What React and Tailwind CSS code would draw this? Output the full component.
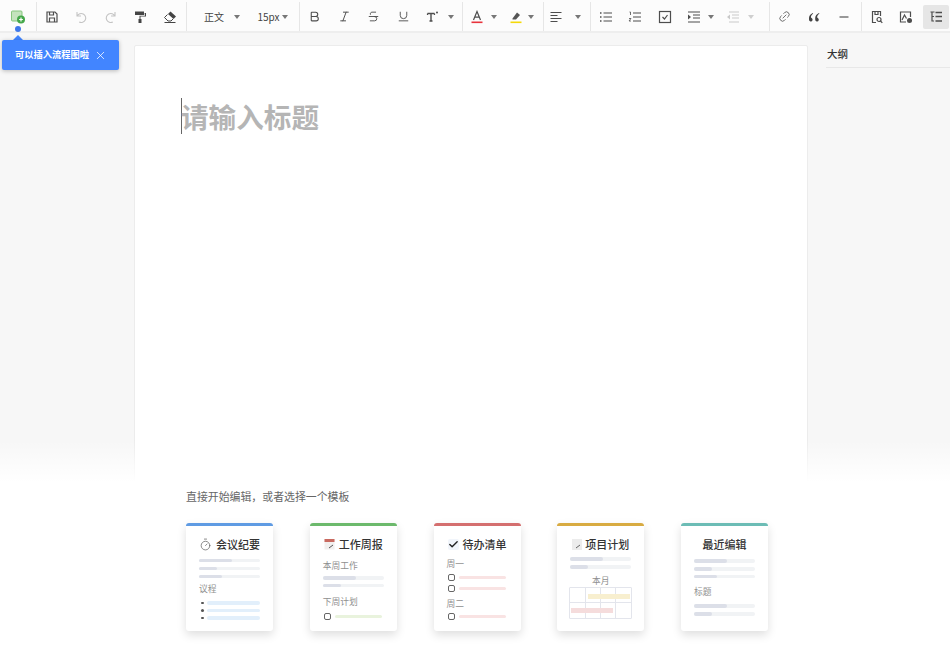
import { Bold, Italic, Strikethrough, Underline, Link2, Minus, X, Check, Timer } from 'lucide-react';

const INK = '#4d4d4d';

function Icon({ children, w = 14, className = '' }) {
  return (
    <svg width={w} height={14} viewBox="0 0 14 14" fill="none" stroke={INK} strokeWidth="1.2" className={className}>
      {children}
    </svg>
  );
}

function Btn({ children, className = 'w-[29.5px]' }) {
  return <div className={`h-full flex items-center justify-center shrink-0 ${className}`}>{children}</div>;
}

function Caret({ className = '', light }) {
  return (
    <div
      className={`w-0 h-0 shrink-0 border-l-[3.5px] border-r-[3.5px] border-t-[4px] border-l-transparent border-r-transparent ${light ? 'border-t-[#cfcfcf]' : 'border-t-[#777777]'} ${className}`}
    />
  );
}

function Group({ children, className = '' }) {
  return <div className={`h-full flex items-center border-l border-[#e6e6e6] ${className}`}>{children}</div>;
}

function Toolbar() {
  return (
    <div className="h-[33px] shrink-0 pt-[2px] bg-[#fcfcfc] border-b-2 border-[#eeeeee] flex items-stretch text-[#444444]">
      <div className="w-[36px] h-full flex items-center justify-center shrink-0">
        <svg width="14" height="14" viewBox="0 0 14 14">
          <rect x="0.5" y="1" width="10.5" height="10" rx="1" fill="#c4e3bd" stroke="#86c67e" />
          <circle cx="10" cy="9.5" r="4" fill="#45a84a" />
          <path d="M10 7.6v3.8M8.1 9.5h3.8" stroke="#fff" strokeWidth="1.2" />
        </svg>
      </div>

      <Group className="w-[150px]">
        <Btn>
          <Icon>
            <path d="M2 2h8l2 2v8H2z" />
            <path d="M4.5 2v3h4V2M4.5 12V8h5v4" />
          </Icon>
        </Btn>
        <Btn>
          <svg width="14" height="14" viewBox="0 0 14 14" fill="none" stroke="#c4c4c4" strokeWidth="1.1">
            <path d="M3 2v4h4M3.2 6a4.5 4.5 0 1 1 2 6" />
          </svg>
        </Btn>
        <Btn>
          <svg width="14" height="14" viewBox="0 0 14 14" fill="none" stroke="#c4c4c4" strokeWidth="1.1">
            <path d="M11 2v4H7M10.8 6a4.5 4.5 0 1 0-2 6" />
          </svg>
        </Btn>
        <Btn>
          <svg width="14" height="14" viewBox="0 0 14 14" fill="#444444">
            <rect x="2" y="1.5" width="9" height="3.5" />
            <path d="M11.5 3H13v3.5H7.5V9h-1V5.8H12z" />
            <rect x="5.5" y="9" width="3" height="4" />
          </svg>
        </Btn>
        <Btn>
          <svg width="14" height="14" viewBox="0 0 14 14" fill="#444444">
            <path d="M7.5 1.5 13 6.5l-2.5 2.5-5.5-5z" />
            <path d="M4.5 4.5 1.5 7.5l3.5 3.5h3l2-2" fill="none" stroke="#444444" />
            <rect x="1.5" y="12" width="11" height="1" />
          </svg>
        </Btn>
      </Group>

      <Group className="w-[113px]">
        <span className="w-[54px] text-center text-[10px]">正文</span>
        <Caret className="ml-[-7.5px]" />
        <span className="w-[38px] ml-[10px] text-center text-[10px]">15px</span>
        <Caret className="ml-[-5.5px]" />
      </Group>

      <Group className="w-[163px]">
        <Btn><Bold size={13} color={INK} strokeWidth={2} /></Btn>
        <Btn><Italic size={13} color={INK} strokeWidth={1.8} /></Btn>
        <Btn><Strikethrough size={13} color={INK} strokeWidth={1.7} /></Btn>
        <Btn><Underline size={13} color={INK} strokeWidth={1.7} /></Btn>
        <Btn>
          <Icon>
            <path d="M1.5 3.5h7M5 3.5V11M3.5 11h3" strokeWidth="1.4" />
            <path d="M1.5 3.5v1.5M8.5 3.5v1.5" />
            <circle cx="11" cy="2.5" r="1" fill={INK} stroke="none" />
          </Icon>
        </Btn>
        <Caret />
      </Group>

      <Group className="w-[81px]">
        <Btn className="w-[28px]">
          <svg width="14" height="14" viewBox="0 0 14 14" fill="none">
            <path d="M3.5 10 7 1.5 10.5 10M4.7 7.2h4.6" stroke={INK} strokeWidth="1.2" />
            <rect x="1.5" y="11.5" width="11" height="1.6" fill="#e8333c" />
          </svg>
        </Btn>
        <Caret />
        <Btn className="w-[24px] ml-[7px]">
          <svg width="14" height="14" viewBox="0 0 14 14" fill="none">
            <path d="M3.5 8.5 8 2.5l3 2.5-4 4.5H3.5z" fill="#555555" />
            <rect x="1.5" y="11.5" width="11" height="1.6" fill="#f5d90a" />
          </svg>
        </Btn>
        <Caret />
      </Group>

      <Group className="w-[47px]">
        <Btn className="w-[24px]">
          <Icon>
            <path d="M1.5 2.5h11M1.5 5.5h7M1.5 8.5h11M1.5 11.5h7" />
          </Icon>
        </Btn>
        <Caret className="ml-[7px]" />
      </Group>

      <Group className="w-[179px]">
        <Btn>
          <Icon>
            <path d="M1 3h1.5M1 7h1.5M1 11h1.5" strokeWidth="1.6" />
            <path d="M4.5 3H13M4.5 7H13M4.5 11H13" />
          </Icon>
        </Btn>
        <Btn>
          <Icon>
            <path d="M1.5 2h1v3M1 8.5h2L1 11h2" strokeWidth="0.8" />
            <path d="M5 3h8M5 7h8M5 11h8" />
          </Icon>
        </Btn>
        <Btn>
          <Icon>
            <rect x="1.5" y="1.5" width="11" height="11" />
            <path d="m4.5 7 2 2 3-4" />
          </Icon>
        </Btn>
        <Btn>
          <Icon>
            <path d="M1 2h12M6 5h7M6 8h7M1 12h12" />
            <path d="M1 4.5v5L4 7z" fill={INK} stroke="none" />
          </Icon>
        </Btn>
        <Caret className="ml-[-1px]" />
        <Btn className="w-[39px] ml-[-1px]">
          <svg width="14" height="14" viewBox="0 0 14 14" fill="none" stroke="#c9c9c9" strokeWidth="1.1">
            <path d="M3 2h10M6 5h7M6 8h7M3 12h10" />
            <path d="M4 4.5v5L1 7z" fill="#c9c9c9" stroke="none" />
          </svg>
        </Btn>
        <Caret light className="ml-[-4px]" />
      </Group>

      <Group className="w-[92px]">
        <Btn><Link2 size={13} color={INK} strokeWidth={1.4} className="-rotate-45" /></Btn>
        <Btn>
          <svg width="14" height="14" viewBox="0 0 14 14" fill="#444444">
            <path d="M5.8 3C3.5 4 2 5.8 2 8v1.5A1.8 1.8 0 1 0 4.6 8C4 7.8 3.8 7.3 4 6.5c.3-1 1-2 2.2-2.7zM12 3c-2.3 1-3.8 2.8-3.8 5v1.5A1.8 1.8 0 1 0 10.8 8c-.6-.2-.8-.7-.6-1.5.3-1 1-2 2.2-2.7z" />
          </svg>
        </Btn>
        <Btn><Minus size={14} color="#333333" strokeWidth={1.7} /></Btn>
      </Group>

      <Group className="grow">
        <Btn>
          <Icon>
            <path d="M6 12.5H2.5v-11h8V6" />
            <path d="M5 1.5v3h3v-3" />
            <circle cx="9" cy="9.5" r="2" />
            <path d="m10.5 11 1.8 1.8" />
          </Icon>
        </Btn>
        <Btn>
          <Icon>
            <path d="M7 12H1.5V2h10v5" />
            <path d="m3 10 2.5-5 2 3.5" />
            <circle cx="10.5" cy="10.5" r="2.5" fill={INK} stroke="none" />
          </Icon>
        </Btn>
        <div className="w-[26px] h-[24px] ml-[1.5px] rounded-[2px] bg-[#e6e6e6] flex items-center justify-center">
          <Icon>
            <path d="M1.5 2h4M3 2v9h2M3 6.5h2" />
            <path d="M6.5 2.5H13M6.5 6.5H13M6.5 11H13" strokeWidth="1.5" />
          </Icon>
        </div>
      </Group>
    </div>
  );
}

function Bar({ w, color = 'bg-[#dcdfe8]', className = '' }) {
  return (
    <div className={`h-[3.5px] rounded-full bg-[#f1f3f5] ${className}`}>
      <div className={`h-full rounded-full ${color}`} style={{ width: w }} />
    </div>
  );
}

function Label({ children, className = '' }) {
  return <div className={`text-[8.75px] leading-[12px] text-[#8f8f8f] ${className}`}>{children}</div>;
}

function CheckRow({ color, className = '' }) {
  return (
    <div className={`flex items-center gap-[4px] h-[7px] ml-[1px] mr-[2px] ${className}`}>
      <div className="w-[7px] h-[7px] shrink-0 rounded-[2px] border-[1.3px] border-[#666666]" />
      <div className={`h-[3.5px] grow rounded-full ${color}`} />
    </div>
  );
}

function Dot({ className = '' }) {
  return (
    <div className={`flex items-center gap-[3px] h-[4px] ml-[2px] ${className}`}>
      <div className="w-[2.5px] h-[2.5px] rounded-full bg-[#555555] shrink-0" />
      <div className="h-[3.5px] grow rounded-full bg-[#e2effb]" />
    </div>
  );
}

function Card({ top, icon, title, gap = 'gap-[4px]', children }) {
  return (
    <div className="w-[87px] h-[108px] shrink-0 rounded-[3px] overflow-hidden bg-white shadow-[0_4px_10px_rgba(0,0,0,0.13)]">
      <div className={`h-[3px] ${top}`} />
      <div className="px-[13px]">
        <div className={`h-[14px] mt-[11px] flex items-center justify-center ${gap} text-[11px] leading-[14px] font-medium text-[#333333] whitespace-nowrap`}>
          {icon}
          <span>{title}</span>
        </div>
        {children}
      </div>
    </div>
  );
}

function Templates() {
  return (
    <div className="absolute left-0 right-0 bottom-0 pointer-events-none">
      <div className="h-[42px] bg-gradient-to-b from-[rgba(255,255,255,0)] to-white" />
      <div className="h-[167px] bg-white pl-[186px]">
        <p className="pt-[6px] text-[10.9px] leading-[16px] text-[#666666]">直接开始编辑{'\uFF0C'}或者选择一个模板</p>
        <div className="mt-[19px] flex gap-[36.75px]">
          <Card top="bg-[#5f9be3]" title="会议纪要" icon={<Timer size={13} color="#666666" strokeWidth={1.4} />}>
            <Bar w="33px" className="mt-[7.5px]" />
            <Bar w="18px" className="mt-[4.5px]" />
            <Bar w="23px" className="mt-[4.5px]" />
            <Label className="mt-[5px]">议程</Label>
            <Dot className="mt-[6px]" />
            <Dot className="mt-[3.5px]" />
            <Dot className="mt-[3.5px]" />
          </Card>

          <Card
            top="bg-[#6cb96c]"
            title="工作周报"
            icon={
              <svg width="11" height="12" viewBox="0 0 11 12">
                <rect x="0.5" y="1" width="10" height="10.5" fill="#f1efee" />
                <rect x="0.5" y="1" width="10" height="3" fill="#c96a60" />
                <path d="m5 10 4-3" stroke="#555555" />
              </svg>
            }
          >
            <Label className="mt-[9px]">本周工作</Label>
            <Bar w="33px" className="mt-[4px]" />
            <Bar w="18px" className="mt-[4px]" />
            <Label className="mt-[9px]">下周计划</Label>
            <CheckRow color="bg-[#e9f3dd]" className="mt-[5px]" />
          </Card>

          <Card
            top="bg-[#d46f6f]"
            title="待办清单"
            icon={
              <span className="w-[11px] h-[11px] rounded-[2px] bg-[#f1f5fb] flex items-center justify-center">
                <Check size={11} color="#222222" strokeWidth={3} />
              </span>
            }
          >
            <Label className="mt-[7px]">周一</Label>
            <CheckRow color="bg-[#f9e3e3]" className="mt-[4px]" />
            <CheckRow color="bg-[#f9e3e3]" className="mt-[4px]" />
            <Label className="mt-[6px]">周二</Label>
            <CheckRow color="bg-[#f9e3e3]" className="mt-[3px]" />
          </Card>

          <Card
            top="bg-[#d8ab42]"
            title="项目计划"
            gap="gap-[3px]"
            icon={
              <svg width="10" height="11" viewBox="0 0 10 11">
                <rect width="10" height="11" fill="#ececec" />
                <path d="m4 9 4-3" stroke="#666666" />
              </svg>
            }
          >
            <Bar w="33px" className="mt-[6px]" />
            <Bar w="18px" className="mt-[4.5px]" />
            <div className="mt-[6.5px] text-center text-[8.75px] leading-[12px] text-[#8f8f8f]">本月</div>
            <div className="relative mx-[-1px] h-[32px] grid grid-cols-4 grid-rows-2 border border-[#e3e5ec] rounded-[1px]">
              <div className="border-r border-b border-[#e3e5ec]" />
              <div className="border-r border-b border-[#e3e5ec]" />
              <div className="border-r border-b border-[#e3e5ec]" />
              <div className="border-b border-[#e3e5ec]" />
              <div className="border-r border-[#e3e5ec]" />
              <div className="border-r border-[#e3e5ec]" />
              <div className="border-r border-[#e3e5ec]" />
              <div />
              <div className="absolute left-[18px] top-[6px] w-[42px] h-[4.5px] bg-[#f8efcf]" />
              <div className="absolute left-[1px] top-[20px] w-[42px] h-[4.5px] bg-[#f5dcdc]" />
            </div>
          </Card>

          <Card top="bg-[#6cbcb5]" title="最近编辑">
            <Bar w="33px" className="mt-[8px]" />
            <Bar w="18px" className="mt-[4.5px]" />
            <Bar w="23px" className="mt-[4px]" />
            <Label className="mt-[8px]">标题</Label>
            <Bar w="33px" className="mt-[6px]" />
            <Bar w="18px" className="mt-[4.5px]" />
          </Card>
        </div>
      </div>
    </div>
  );
}

export default function App() {
  return (
    <div
      className="relative h-[649px] w-[950px] overflow-hidden flex flex-col bg-[#f7f7f7]"
      style={{ fontFamily: '"Noto Sans CJK SC", "Liberation Sans", sans-serif' }}
    >
      <Toolbar />

      <div className="grow flex min-h-0">
        <div className="w-[134px] shrink-0" />
        <div className="w-[674px] shrink-0 mt-[12px] bg-white border border-[#ececec] rounded-t-[2px] pl-[46px] pt-[51px]">
          <div className="flex items-center h-[38px]">
            <div className="w-[1px] h-[36px] bg-[#666666]" />
            <h1 className="-ml-[1px] text-[27.6px] leading-[38px] font-bold text-[#b5b5b5]">请输入标题</h1>
          </div>
        </div>
        <div className="grow pl-[18px]">
          <div className="h-[35px] pt-[13px] pl-[1px] border-b border-[#e8e8e8] text-[10.5px] leading-[16px] font-medium text-[#333333]">大纲</div>
        </div>
      </div>

      <Templates />

      {/* guide bubble over the first toolbar button */}
      <div className="absolute left-[2px] top-[26px]">
        <div className="ml-[13px] w-[6px] h-[6px] rounded-full bg-[#3f78ea]" />
        <div className="ml-[11px] mt-[3px] w-0 h-0 border-l-[5px] border-r-[5px] border-b-[5px] border-l-transparent border-r-transparent border-b-[#4285ff]" />
        <div className="w-[117px] h-[30px] rounded-[2px] bg-[#4285ff] shadow-[0_1px_4px_rgba(0,0,0,0.25)] flex items-center pl-[13px] text-white">
          <span className="w-[79px] text-[9.25px] font-bold whitespace-nowrap">可以插入流程图啦</span>
          <X size={13} color="#ffffff" strokeWidth={1.4} />
        </div>
      </div>
    </div>
  );
}
